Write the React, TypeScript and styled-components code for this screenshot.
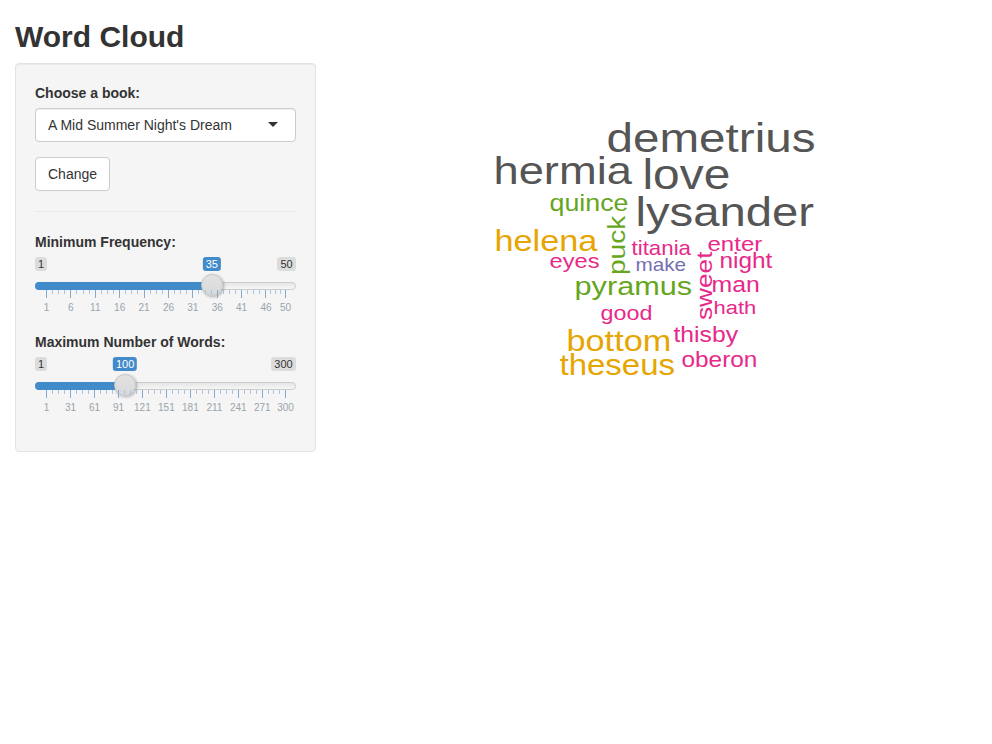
import React from "react";
import styled, { createGlobalStyle } from "styled-components";

const GlobalStyle = createGlobalStyle`
  html, body { margin: 0; padding: 0; background: #fff; }
  body {
    font-family: "Liberation Sans", Arial, sans-serif;
    font-size: 14px;
    line-height: 1.42857143;
    color: #333;
  }
  *, *::before, *::after { box-sizing: border-box; }
`;

const Page = styled.div`
  padding: 0 15px;
`;

const Title = styled.h2`
  font-size: 30px;
  font-weight: 700;
  line-height: 1.1;
  margin: 20px 0 10px;
  color: #333;
`;

const Row = styled.div`
  display: flex;
  margin: 0 -15px;
`;

const SideCol = styled.div`
  width: 33.33333%;
  padding: 0 15px;
`;

const MainCol = styled.div`
  width: 66.66667%;
  padding: 0 15px;
`;

const Well = styled.div`
  background: #f5f5f5;
  border: 1px solid #e3e3e3;
  border-radius: 4px;
  box-shadow: inset 0 1px 1px rgba(0, 0, 0, 0.05);
  padding: 19px;
`;

const FormGroup = styled.div`
  margin-bottom: 15px;
`;

const Label = styled.label`
  display: block;
  font-weight: 700;
  margin-bottom: 5px;
`;

const SelectBox = styled.div`
  position: relative;
  height: 34px;
  border: 1px solid #ccc;
  border-radius: 4px;
  background: #fff;
  padding: 6px 12px;
  line-height: 20px;
  color: #333;
  box-shadow: inset 0 1px 1px rgba(0, 0, 0, 0.075);
  &::after {
    content: "";
    position: absolute;
    right: 17px;
    top: 50%;
    margin-top: -3px;
    border-style: solid;
    border-width: 5px 5px 0 5px;
    border-color: #333 transparent transparent transparent;
  }
`;

const Button = styled.button`
  display: inline-block;
  font-family: inherit;
  font-size: 14px;
  line-height: 20px;
  padding: 6px 12px;
  border: 1px solid #ccc;
  border-radius: 4px;
  background: #fff;
  color: #333;
  margin: 0;
  cursor: pointer;
`;

const Rule = styled.hr`
  border: 0;
  border-top: 1px solid #eaeaea;
  margin: 20px 0;
`;

/* ---------- slider ---------- */

const SliderBox = styled.div`
  position: relative;
  height: 60px;
`;

const TagRow = styled.div`
  position: relative;
  display: flex;
  justify-content: space-between;
  height: 14px;
`;

const Tag = styled.span<{ $active?: boolean }>`
  display: block;
  height: 14px;
  font-size: 11px;
  line-height: 12px;
  padding: 1px 3px;
  border-radius: 3px;
  white-space: nowrap;
  background: ${(p) => (p.$active ? "#428bca" : "rgba(0,0,0,0.1)")};
  color: ${(p) => (p.$active ? "#fff" : "#333")};
`;

const ValueTag = styled(Tag)`
  position: absolute;
  top: 0;
  transform: translateX(-50%);
`;

const Track = styled.div`
  position: relative;
  margin-top: 11px;
  height: 8px;
  border: 1px solid #ccc;
  border-radius: 16px;
  background: linear-gradient(to bottom, #ddd -50%, #fff 150%);
`;

const Fill = styled.div`
  position: absolute;
  left: -1px;
  top: -1px;
  height: 8px;
  background: #428bca;
  border-radius: 16px 0 0 16px;
`;

const Handle = styled.div`
  position: absolute;
  top: -9px;
  width: 22px;
  height: 22px;
  margin-left: -12px;
  border-radius: 50%;
  background: linear-gradient(to bottom, #e2e2e2, #d8d8d8);
  border: 1px solid #c4c4c4;
  box-shadow: 1px 1px 3px rgba(0, 0, 0, 0.3);
`;

const Grid = styled.div`
  position: relative;
  height: 27px;
`;

const Tick = styled.span<{ $big?: boolean }>`
  position: absolute;
  top: 0;
  width: 1px;
  height: ${(p) => (p.$big ? 8 : 4)}px;
  background: ${(p) => (p.$big ? "#80a9d6" : "#a9c3e0")};
`;

const TickText = styled.span`
  position: absolute;
  bottom: 4px;
  font-size: 10px;
  line-height: 10px;
  color: #99a4ac;
  white-space: nowrap;
  transform: translateX(-50%);
`;

type SliderProps = {
  min: number;
  max: number;
  value: number;
  labels: number[];
};

const TRACK_W = 261;
const PAD = 11;
const GRID_W = TRACK_W - 2 * PAD;

function Slider({ min, max, value, labels }: SliderProps) {
  const pos = (v: number) => PAD + ((v - min) / (max - min)) * GRID_W;
  const ticks: { x: number; big: boolean }[] = [];
  labels.forEach((l, i) => {
    ticks.push({ x: pos(l), big: true });
    if (i > 0) {
      const a = pos(labels[i - 1]);
      const b = pos(l);
      for (let z = 1; z < 4; z++) ticks.push({ x: a + ((b - a) * z) / 4, big: false });
    }
  });
  const vp = pos(value);
  return (
    <SliderBox>
      <TagRow>
        <Tag>{min}</Tag>
        <Tag>{max}</Tag>
        <ValueTag $active style={{ left: vp }}>
          {value}
        </ValueTag>
      </TagRow>
      <Track>
        <Fill style={{ width: vp + 1 }} />
        <Handle style={{ left: vp }} />
      </Track>
      <Grid>
        {ticks.map((t, i) => (
          <Tick key={i} $big={t.big} style={{ left: Math.round(t.x) }} />
        ))}
        {labels.map((l) => (
          <TickText key={l} style={{ left: pos(l) + 0.5 }}>
            {l}
          </TickText>
        ))}
      </Grid>
    </SliderBox>
  );
}

/* ---------- word cloud ---------- */

const Cloud = styled.svg`
  display: block;
  overflow: visible;
`;

const Word = styled.text`
  font-family: "Liberation Sans", Arial, sans-serif;
`;

const GREY = "#555555";
const GREEN = "#66a61e";
const GOLD = "#e6a502";
const PINK = "#e7298a";
const PURPLE = "#7570b3";

type W = { t: string; x: number; y: number; s: number; c: string; r?: boolean };

const WORDS: W[] = [
  { t: "demetrius", x: 608, y: 152, s: 41.4, c: GREY },
  { t: "hermia", x: 495, y: 184, s: 39.4, c: GREY },
  { t: "love", x: 644, y: 189, s: 41.6, c: GREY },
  { t: "lysander", x: 637, y: 226, s: 41.1, c: GREY },
  { t: "quince", x: 551, y: 211, s: 23.3, c: GREEN },
  { t: "helena", x: 496, y: 251, s: 29.8, c: GOLD },
  { t: "puck", x: 624.5, y: 275, s: 24.4, c: GREEN, r: true },
  { t: "titania", x: 633, y: 255, s: 19.4, c: PINK },
  { t: "enter", x: 709, y: 251, s: 20.9, c: PINK },
  { t: "eyes", x: 551, y: 268, s: 20.6, c: PINK },
  { t: "make", x: 637, y: 271, s: 18, c: PURPLE },
  { t: "night", x: 721, y: 268, s: 21.2, c: PINK },
  { t: "pyramus", x: 576, y: 295, s: 26.7, c: GREEN },
  { t: "sweet", x: 712, y: 320, s: 22.8, c: PINK, r: true },
  { t: "man", x: 713, y: 292, s: 21.6, c: PINK },
  { t: "hath", x: 715, y: 314, s: 19.1, c: PINK },
  { t: "good", x: 602, y: 320, s: 20.3, c: PINK },
  { t: "thisby", x: 675, y: 342, s: 21.5, c: PINK },
  { t: "bottom", x: 568, y: 351, s: 29.8, c: GOLD },
  { t: "theseus", x: 561, y: 375, s: 28.7, c: GOLD },
  { t: "oberon", x: 683, y: 367, s: 21.2, c: PINK },
];

const OX = 346;
const OY = 63;
const SX = 1.15;

function WordCloud() {
  return (
    <Cloud width={631} height={400}>
      {WORDS.map((w) => {
        const x = w.x - OX - (w.r ? 0 : 1.5);
        const y = w.y - OY;
        const tf = w.r
          ? `translate(${x} ${y}) rotate(-90) scale(${SX} 1)`
          : `translate(${x} ${y}) scale(${SX} 1)`;
        return (
          <Word key={w.t} transform={tf} fontSize={w.s} fill={w.c}>
            {w.t}
          </Word>
        );
      })}
    </Cloud>
  );
}

export default function App() {
  return (
    <Page>
      <GlobalStyle />
      <Title>Word Cloud</Title>
      <Row>
        <SideCol>
          <Well>
            <FormGroup>
              <Label>Choose a book:</Label>
              <SelectBox>A Mid Summer Night's Dream</SelectBox>
            </FormGroup>
            <Button>Change</Button>
            <Rule />
            <FormGroup>
              <Label>Minimum Frequency:</Label>
              <Slider min={1} max={50} value={35} labels={[1, 6, 11, 16, 21, 26, 31, 36, 41, 46, 50]} />
            </FormGroup>
            <FormGroup>
              <Label>Maximum Number of Words:</Label>
              <Slider
                min={1}
                max={300}
                value={100}
                labels={[1, 31, 61, 91, 121, 151, 181, 211, 241, 271, 300]}
              />
            </FormGroup>
          </Well>
        </SideCol>
        <MainCol>
          <WordCloud />
        </MainCol>
      </Row>
    </Page>
  );
}
